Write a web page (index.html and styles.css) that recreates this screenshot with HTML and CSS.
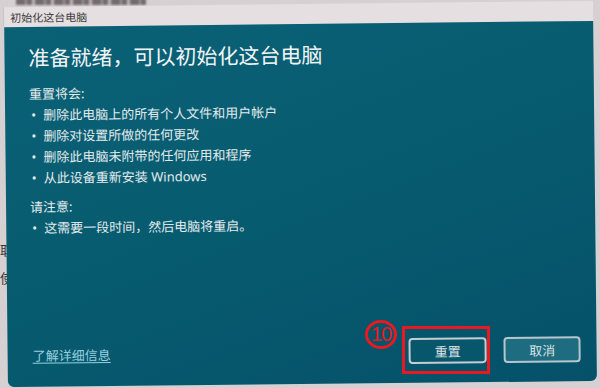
FILE: index.html
```html
<!DOCTYPE html>
<html lang="zh-CN">
<head>
<meta charset="utf-8">
<title>初始化这台电脑</title>
<link rel="stylesheet" href="styles.css">
</head>
<body>
<div class="backdrop-top"></div>
<div class="backdrop-left"><span>取</span><span>使</span></div>
<div class="window">
  <div class="titlebar">初始化这台电脑</div>
  <div class="panel">
    <h1 class="heading">准备就绪，可以初始化这台电脑</h1>
    <p class="label">重置将会:</p>
    <ul class="list">
      <li>删除此电脑上的所有个人文件和用户帐户</li>
      <li>删除对设置所做的任何更改</li>
      <li>删除此电脑未附带的任何应用和程序</li>
      <li>从此设备重新安装 Windows</li>
    </ul>
    <p class="label note">请注意:</p>
    <ul class="list">
      <li>这需要一段时间，然后电脑将重启。</li>
    </ul>
    <div class="footer">
      <a class="link" href="#">了解详细信息</a>
      <div class="actions">
        <button class="btn btn-reset">重置</button>
        <button class="btn btn-cancel">取消</button>
      </div>
    </div>
  </div>
</div>
<div class="marker-box"></div>
<div class="marker-num">10</div>
</body>
</html>
```
FILE: styles.css
```css
* { box-sizing: border-box; }
html, body { margin: 0; padding: 0; }
body {
  width: 600px;
  height: 388px;
  overflow: hidden;
  position: relative;
  background: #d7d0d2;
  font-family: "Noto Sans", "Noto Sans CJK SC", sans-serif;
  padding: 4px 0 0 5px;
}
.backdrop-top {
  position: absolute;
  top: -2px;
  left: 16px;
  width: 130px;
  height: 7px;
  background: repeating-linear-gradient(90deg, #5b5355 0 9px, #8d8587 9px 11px, #5b5355 11px 16px, #b8b0b2 16px 19px);
  filter: blur(1.2px);
  opacity: 0.8;
}
.backdrop-left {
  position: absolute;
  left: 0;
  top: 241px;
  display: flex;
  flex-direction: column;
  gap: 10px;
  font-size: 13px;
  line-height: 18px;
  color: #3a3436;
  font-family: "Noto Sans CJK SC", sans-serif;
}
.window {
  position: relative;
  width: 590px;
  transform: rotate(-0.6deg);
  transform-origin: 300px 195px;
}
.titlebar {
  height: 20px;
  background: #e5dfe1;
  color: #3b3b3b;
  font-size: 11px;
  line-height: 20px;
  padding-left: 6px;
  border-left: 1px solid #c9c2c4;
  font-family: "Noto Sans CJK SC", sans-serif;
}
.panel {
  margin-left: 1px;
  width: 589px;
  height: 360px;
  background: linear-gradient(160deg, #0a6176 0%, #075b6f 50%, #05516a 100%);
  border-radius: 0 0 6px 6px;
  padding: 16px 16px 19px 24px;
  display: flex;
  flex-direction: column;
  color: #e2eaec;
  font-family: "Noto Sans", "Noto Sans CJK SC", sans-serif;
}
.heading {
  margin: 0;
  font-size: 21px;
  line-height: 28px;
  font-weight: 400;
  color: #f1f5f6;
  font-family: "Noto Sans CJK SC", sans-serif;
}
.label {
  margin: 13px 0 0 0;
  font-size: 13px;
  line-height: 21px;
}
.label.note { margin-top: 8px; }
.list {
  margin: 0;
  padding: 0;
  list-style: none;
  font-size: 13px;
  line-height: 21px;
}
.list li {
  display: flex;
  padding-left: 2px;
}
.list li::before {
  content: "•";
  width: 12px;
  flex: none;
}
.footer {
  margin-top: auto;
  display: flex;
  align-items: center;
  justify-content: space-between;
}
.link {
  margin-left: 1px;
  font-size: 13px;
  color: #97d0df;
  text-decoration: underline;
  text-underline-offset: 2px;
}
.actions {
  display: flex;
  gap: 17px;
}
.btn {
  height: 26px;
  border-radius: 4px;
  border: 2px solid #c5cdd1;
  font-family: "Noto Sans CJK SC", sans-serif;
  font-size: 13px;
  color: #d9e0e3;
  padding: 0;
}
.btn-reset {
  width: 78px;
  background: #07566b;
}
.btn-cancel {
  width: 77px;
  background: #1d6c7f;
  border-color: #b7c6cb;
}
.marker-box {
  position: absolute;
  left: 402px;
  top: 326px;
  width: 88px;
  height: 48px;
  border: 3px solid #e81a1f;
}
.marker-num {
  position: absolute;
  left: 365px;
  top: 320px;
  width: 32px;
  height: 29px;
  border: 3px solid #e81a1f;
  border-radius: 50%;
  color: #e81a1f;
  font-family: "Liberation Sans", sans-serif;
  font-size: 20px;
  line-height: 23px;
  text-align: center;
  letter-spacing: -1px;
}
```
